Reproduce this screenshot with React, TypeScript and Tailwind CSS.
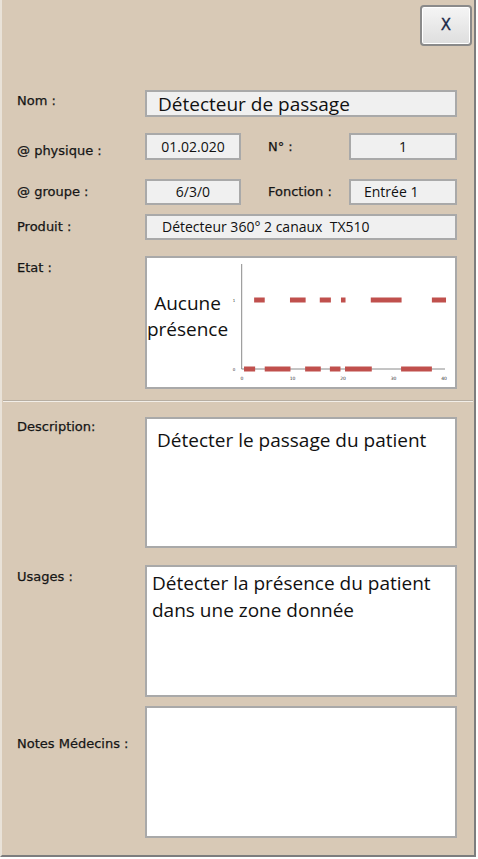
import React from "react";

const label = "text-[13px] text-[#111] [font-family:'DejaVu_Sans',sans-serif] [-webkit-text-stroke:0.25px_#222]";
const val = "[font-family:'Open_Sans',sans-serif] text-[#111]";
const inputBox = "bg-[#f0f0f0] border-2 border-[#a9a9a9] flex items-center";
const bigBox = "bg-white border-2 border-[#a9a9a9]";

const ones: [number, number][] = [
  [2.4, 4.5], [9.5, 12.6], [15.4, 17.6], [19.6, 20.5], [25.5, 31.6], [37.6, 40.4],
];
const zeros: [number, number][] = [
  [0.4, 2.6], [4.5, 9.6], [12.5, 15.6], [17.4, 19.5], [20.4, 25.7], [31.5, 37.6],
];

function Chart() {
  const x0 = 14;
  const k = 5.05;
  const X = (u: number) => x0 + u * k;
  return (
    <svg width="227" height="128" viewBox="0 0 227 128" className="block">
      <line x1="13.7" y1="6" x2="13.7" y2="111" stroke="#8a8a8a" strokeWidth="1" />
      <line x1="13.7" y1="111" x2="217" y2="111" stroke="#8a8a8a" strokeWidth="1" />
      {zeros.map(([a, b], i) => (
        <rect key={"z" + i} x={X(a)} y={108.5} width={X(b) - X(a)} height={5} fill="#c0504d" />
      ))}
      {ones.map(([a, b], i) => (
        <rect key={"o" + i} x={X(a)} y={39.5} width={X(b) - X(a)} height={5} fill="#c0504d" />
      ))}
      <text x="6" y="44" fontSize="4" fill="#333" textAnchor="middle" fontFamily="DejaVu Sans">1</text>
      <text x="6" y="113" fontSize="4" fill="#333" textAnchor="middle" fontFamily="DejaVu Sans">0</text>
      {[0, 10, 20, 30, 40].map((t) => (
        <text key={t} x={X(t)} y="122" fontSize="4.5" fill="#333" textAnchor="middle" fontFamily="DejaVu Sans">
          {t}
        </text>
      ))}
    </svg>
  );
}

export default function App() {
  return (
    <div className="w-[478px] h-[859px] bg-white">
      <div className="w-[476px] h-[857px] bg-[#d8c9b6] border-r-2 border-b-2 border-[#7d7d7d] border-l-2 border-l-[#e9e2d8] flex flex-col">
        {/* header */}
        <div className="flex justify-end pt-[5px] pr-[2px]">
          <button className="w-[52px] h-[41px] rounded-[4px] border-2 border-[#8a8a8a] bg-gradient-to-b from-[#f5f5f5] to-[#dedede] shadow-[inset_0_0_0_1px_#ffffff] flex items-center justify-center text-[15px] text-[#1b2a4a] [font-family:'DejaVu_Sans',sans-serif] [-webkit-text-stroke:0.3px_#1b2a4a]">
            X
          </button>
        </div>

        {/* Nom */}
        <div className="flex items-center mt-[44px]">
          <div className={`w-[143px] pl-[15px] -mt-[6px] ${label}`}>Nom :</div>
          <div className={`${inputBox} w-[312px] h-[27px] pl-[11px]`}>
            <span className={`${val} text-[19px] leading-[24px]`}>Détecteur de passage</span>
          </div>
        </div>

        {/* physique / N° */}
        <div className="flex items-center mt-[15px]">
          <div className={`w-[143px] pl-[15px] mt-[9px] ${label}`}>@ physique :</div>
          <div className={`${inputBox} w-[96px] h-[27px] justify-center`}>
            <span className={`${val} text-[14px]`}>01.02.020</span>
          </div>
          <div className={`w-[108px] pl-[27px] ${label}`}>N° :</div>
          <div className={`${inputBox} w-[108px] h-[27px] justify-center`}>
            <span className={`${val} text-[14px]`}>1</span>
          </div>
        </div>

        {/* groupe / Fonction */}
        <div className="flex items-center mt-[18px]">
          <div className={`w-[143px] pl-[15px] ${label}`}>@ groupe :</div>
          <div className={`${inputBox} w-[96px] h-[26px] justify-center`}>
            <span className={`${val} text-[14px]`}>6/3/0</span>
          </div>
          <div className={`w-[108px] pl-[27px] ${label}`}>Fonction :</div>
          <div className={`${inputBox} w-[108px] h-[26px] pl-[13px]`}>
            <span className={`${val} text-[14px]`}>Entrée 1</span>
          </div>
        </div>

        {/* Produit */}
        <div className="flex items-center mt-[9px]">
          <div className={`w-[143px] pl-[15px] ${label}`}>Produit :</div>
          <div className={`${inputBox} w-[312px] h-[26px] pl-[15px]`}>
            <span className={`${val} text-[14px] whitespace-pre`}>Détecteur 360° 2 canaux  TX510</span>
          </div>
        </div>

        {/* Etat */}
        <div className="flex mt-[16px]">
          <div className={`w-[143px] pl-[15px] pt-[2px] ${label}`}>Etat :</div>
          <div className={`${bigBox} w-[312px] h-[133px] flex`}>
            <div className="w-[81px] flex items-center justify-center text-center pb-[12px]">
              <span className={`${val} text-[19px] leading-[26px]`}>
                Aucune
                <br />
                présence
              </span>
            </div>
            <Chart />
          </div>
        </div>

        {/* separator */}
        <div className="mt-[11px] h-[2px] mx-[1px] border-t border-[#b7aea2] bg-[#f2eee8]" />

        {/* Description */}
        <div className="flex mt-[15px]">
          <div className={`w-[143px] pl-[15px] ${label}`}>Description:</div>
          <div className={`${bigBox} w-[312px] h-[131px] pl-[10px] pt-[8px]`}>
            <span className={`${val} text-[19px] leading-[26px]`}>Détecter le passage du patient</span>
          </div>
        </div>

        {/* Usages */}
        <div className="flex mt-[17px]">
          <div className={`w-[143px] pl-[15px] pt-[2px] ${label}`}>Usages :</div>
          <div className={`${bigBox} w-[312px] h-[132px] pl-[5px] pt-[3px]`}>
            <p className={`${val} text-[19px] leading-[27px]`}>
              Détecter la présence du patient
              <br />
              dans une zone donnée
            </p>
          </div>
        </div>

        {/* Notes */}
        <div className="flex mt-[9px]">
          <div className={`w-[143px] pl-[15px] pt-[28px] ${label}`}>Notes Médecins :</div>
          <div className={`${bigBox} w-[312px] h-[132px]`} />
        </div>
      </div>
    </div>
  );
}
